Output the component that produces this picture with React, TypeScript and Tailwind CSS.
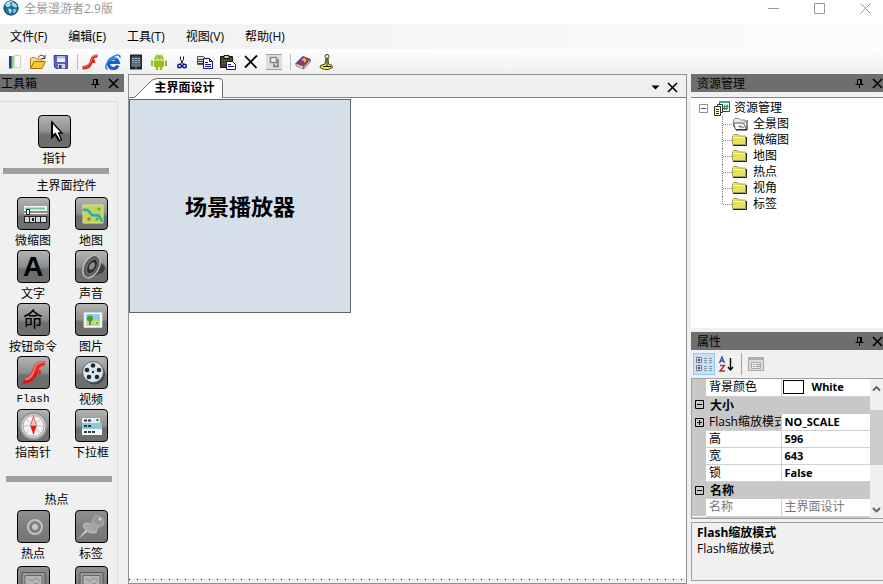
import type { ReactNode } from "react";
import clsx from "clsx";

const MENUS = ["文件(F)", "编辑(E)", "工具(T)", "视图(V)", "帮助(H)"];

interface IconProps {
  size?: number;
  box?: number;
  children: ReactNode;
}

function Icon({ size = 16, box = 16, children }: IconProps) {
  return (
    <svg width={size} height={size} viewBox={`0 0 ${box} ${box}`} fill="none" className="block shrink-0" aria-hidden>
      {children}
    </svg>
  );
}

const icons = {
  globe: (
    <Icon>
      <circle cx="8" cy="8" r="7.500" fill="#1d7399" />
      <circle cx="8" cy="8" r="7" stroke="#114f70" />
      <path d="M2 4.500C3.500 2.500 6 1.500 8 2L7 4l1 1-2 2H4L3 6zM9.500 2l3.500 2 1.500 3L12 7.500l-2-1-1.500-2zM5 8.500l3 .5 1 1.500L7.500 14 6 12zM10.500 9l3 .5-1.500 3-1.500 1z" fill="#a4dbea" />
      <path d="M4 3c2-1.500 4-1.500 6-1" stroke="#e6f7fc" />
    </Icon>
  ),
  newFile: (
    <Icon>
      <path d="M2 2h2.500v12.500H2z" fill="#15486b" />
      <path d="M4 2h1.500v12.500H4z" fill="#2c8fc4" />
      <path d="M5.500 2.500 7.500 2v11l-2 1.500z" fill="#7cc48e" />
      <path d="M7.500 1.500h6v12h-7z" fill="#fafaf5" stroke="#cfcfc6" />
      <path d="M7 2v11" stroke="#c6d85c" />
    </Icon>
  ),
  open: (
    <Icon>
      <path d="M.5 14.500v-10L2 3.500h3L6.500 5H12v3" fill="#f7dd78" stroke="#b48a12" />
      <path d="M.5 14.500 4 7.500h11.500L12 14.500z" fill="#fcc52c" stroke="#9a740c" />
      <path d="M8.500 3.500c1-3 4.500-3 6 0M15 1v3.500h-3" stroke="#333" />
    </Icon>
  ),
  save: (
    <Icon>
      <path d="M1 1.500h13.500v13H3L1.500 13z" fill="#5b60c8" stroke="#3a3f99" />
      <path d="M4 2h8v6H4z" fill="#f3f5ff" />
      <path d="M4 2h8v2.500H4z" fill="#aebbe8" />
      <path d="M5 10h7v4.500H5z" fill="#cfd4ef" />
      <path d="M6 11h2.500v3.500H6z" fill="#2c3080" />
    </Icon>
  ),
  flash: (
    <Icon>
      <path d="M15.500.500C10.500.500 9 3 8 6.500 7 10 5.500 11.500.500 12v3.500C6.500 15.500 9 13.500 10.500 9H13V6h-1.500C12 4.500 13 3.500 15.500 3.500z" fill="#d62925" />
      <path d="M14.500 1.500C11 1.500 10 4 9 7c-1 3.500-3 5.500-7.500 6" stroke="#f4766e" />
    </Icon>
  ),
  explorer: (
    <Icon>
      <path d="M13 11.500A5 5 0 1 1 13.300 8.500H4.500" stroke="#1562c8" strokeWidth="3.200" />
      <path d="M5 6.500a4 3.500 0 0 1 6-1.500" stroke="#63b4f4" />
      <path d="M2.500 15.500C-1.500 14 2.500 6 8.500 2.500c4-2.300 7-2 6.500 1.500" stroke="#2f86de" strokeWidth="1.600" />
    </Icon>
  ),
  phone: (
    <Icon>
      <path d="M2 .500h12v15H2z" fill="#1d2227" />
      <path d="M3.500 2.500h9v10h-9z" fill="#4d647a" />
      <path d="M4 4.500h8M4 6.500h8M4 8.500h8" stroke="#9db0c0" strokeDasharray="2 1" />
      <path d="M3.500 10.500h9v2h-9z" fill="#6f7b85" />
      <path d="M7 14h2" stroke="#999" />
    </Icon>
  ),
  android: (
    <Icon>
      <path d="M3 6.500h10v6.500H3zM3 5.500a5 4.500 0 0 1 10 0zM0 6.500h2.200v5.500H0zM13.800 6.500H16v5.500h-2.200zM4.800 13h2.400v3H4.800zM8.800 13h2.400v3H8.800z" fill="#93c01f" />
      <path d="m4.500 0 1.500 2M11.500 0 10 2" stroke="#93c01f" />
      <path d="M5.500 3.500h1v1h-1zM9.500 3.500h1v1h-1z" fill="#fff" />
    </Icon>
  ),
  cut: (
    <Icon>
      <path d="M6.500 2.500v3l3 4.500M9.500 2.500v3L6.500 10" stroke="#111" />
      <circle cx="5.500" cy="12" r="1.800" stroke="#0b0b8f" strokeWidth="1.400" />
      <circle cx="10.500" cy="12" r="1.800" stroke="#0b0b8f" strokeWidth="1.400" />
    </Icon>
  ),
  copy: (
    <Icon>
      <path d="M.5 2.500h6l2 2v6h-8z" fill="#e2e2e2" stroke="#555" />
      <path d="M1 5.500h6M1 7.500h5M1 9.500h5" stroke="#333" />
      <path d="M6.500 4.500h6l3 3v7h-9z" fill="#fff" stroke="#10107e" />
      <path d="M12.500 4.500v3h3M8 8.500h3M8 10.500h6M8 12.500h6" stroke="#10107e" />
    </Icon>
  ),
  paste: (
    <Icon>
      <path d="M.500 2.500h12v11H.500z" fill="#45451f" stroke="#111" />
      <path d="M2 6.500h9M2 9.500h4" stroke="#77743c" strokeDasharray="1 1" />
      <path d="M4 1.500h5v3H4z" fill="#dcd98c" stroke="#111" />
      <path d="M6.500 7.500h6l3 3v5h-9z" fill="#fff" stroke="#10107e" />
      <path d="M8 10.500h3M8 12.500h6" stroke="#10107e" />
    </Icon>
  ),
  remove: (
    <Icon>
      <path d="m2 2 11.500 12M14 1.500 2 13.500" stroke="#000" strokeWidth="1.800" />
    </Icon>
  ),
  arrange: (
    <Icon>
      <path d="M0 0h16v16H0z" fill="#dedede" />
      <path d="M0 .5h16M0 15.500h16" stroke="#a0a0a0" />
      <path d="M4.500 3.500h6v5h-6z" fill="#f2f2f2" stroke="#8a8a8a" strokeWidth="1.500" />
      <path d="M12 5v7.500H8V9.500" stroke="#777" strokeWidth="1.500" />
    </Icon>
  ),
  book: (
    <Icon>
      <path d="M.500 9.500 8 2l7.500 3L9 12.500z" fill="#8d3a6c" />
      <path d="m.500 9.500 8 3v2.500l-7-3z" fill="#ece3d6" stroke="#6b4a55" strokeWidth=".7" />
      <path d="m8.500 12.500 7-7.500v2.500L8.500 15z" fill="#c5acb4" stroke="#6b4a55" strokeWidth=".7" />
      <path d="m7 6 2.500-1 1 1.500L9 8" stroke="#f6d04c" strokeWidth="1.500" />
      <path d="M1.500 8.500 8 2.500" stroke="#5764b8" />
    </Icon>
  ),
  license: (
    <Icon>
      <circle cx="9" cy="2.500" r="2" fill="#fffbd0" stroke="#333" />
      <path d="M8 4.500h2l.5 5.500 3.500 1.500.5 2L10 15.500H6.500L2 13.500l.5-2L7 10z" fill="#f5e52a" stroke="#4b4508" />
      <path d="M9 5v7M5 12.500h8" stroke="#222" />
    </Icon>
  ),
};

const TOOLBAR: { label: string; icon: ReactNode }[][] = [
  [
    { label: "新建", icon: icons.newFile },
    { label: "打开", icon: icons.open },
    { label: "保存", icon: icons.save },
  ],
  [
    { label: "Flash", icon: icons.flash },
    { label: "浏览器", icon: icons.explorer },
    { label: "手机", icon: icons.phone },
    { label: "Android", icon: icons.android },
    { label: "剪切", icon: icons.cut },
    { label: "复制", icon: icons.copy },
    { label: "粘贴", icon: icons.paste },
    { label: "删除", icon: icons.remove },
    { label: "排列", icon: icons.arrange },
  ],
  [
    { label: "帮助", icon: icons.book },
    { label: "注册", icon: icons.license },
  ],
];

const glyphs = {
  pointer: (
    <Icon size={31} box={31}>
      <path d="M13 6v15l3.500-3 3.500 7 2.500-1.200L19.500 17H23z" fill="#fff" stroke="#000" strokeWidth="1.300" />
      <path d="M13 6v15l3-3 4 6" stroke="#000" strokeWidth="2" />
    </Icon>
  ),
  thumbs: (
    <Icon size={31} box={31}>
      <path d="M6 8h23v8H6z" fill="#f3f8f5" />
      <path d="M7 10.500h20" stroke="#6fc797" strokeWidth="2" />
      <path d="M6 14h23" stroke="#222" />
      <path d="M8.500 11.500h3v5h-3z" fill="#fff" stroke="#222" />
      <path d="M6 18h23v7H6z" fill="#222" />
      <path d="M7 19h4v5H7zM12 19h5v5h-5zM18 19h4v5h-4zM23 19h5v5h-5z" fill="#d8d8d8" />
      <path d="M14 20h2v3h-2z" fill="#222" />
    </Icon>
  ),
  map: (
    <Icon size={31} box={31}>
      <path d="M7 7h20v18H7z" fill="#b5d957" />
      <path d="M7 7h20v18H7z" stroke="#dbe8a8" />
      <path d="M19 7 8 24M19 16l8-7" stroke="#dbcc62" strokeWidth="1.500" />
      <path d="M7 12c5-1 6 1 8 4s6 0 8 2 3 4 3 6" stroke="#2ba9c4" strokeWidth="2.500" />
      <circle cx="13" cy="21" r="1.800" fill="#e2622b" />
      <circle cx="23" cy="11" r="1.500" fill="#65a82d" />
      <circle cx="21" cy="21" r="1.500" fill="#65a82d" />
    </Icon>
  ),
  letter: <span className="font-[Liberation_Sans,sans-serif] text-[28px] leading-7 font-bold">A</span>,
  sound: (
    <Icon size={31} box={31}>
      <path d="m20 9 5 3 4 3c1 4-1 7-4 8l-8 3z" fill="#3f3f3f" stroke="#777" />
      <ellipse cx="15.500" cy="15.500" rx="7.500" ry="12" transform="rotate(28 15.500 15.500)" fill="#5a5a5a" stroke="#b7b7b7" strokeWidth="1.500" />
      <ellipse cx="16" cy="15.500" rx="4.500" ry="8" transform="rotate(28 16 15.500)" fill="#2b2b2b" stroke="#777" />
      <ellipse cx="16" cy="15" rx="2.500" ry="4" transform="rotate(28 16 15)" fill="#8d8d8d" />
    </Icon>
  ),
  command: <span className="text-[20px] leading-7">命</span>,
  picture: (
    <Icon size={31} box={31}>
      <path d="M8 8.500h18v15H8z" fill="#fff" stroke="#c6d3db" />
      <path d="M10 10h14v7H10z" fill="#8ec9ee" />
      <path d="M10 17c4 1 8-2 14-1v6H10z" fill="#b9e07c" />
      <path d="M14 17v4" stroke="#7b5a2b" strokeWidth="1.500" />
      <circle cx="14" cy="14.500" r="3" fill="#4a9c28" />
      <path d="M20 18h2v2h-2z" fill="#6cb23f" />
    </Icon>
  ),
  flash: (
    <Icon size={31} box={31}>
      <path d="M27 4c-8-.5-10.500 3-12.500 8.500C12.500 18.500 11 21 6 21.500V27c8-.2 11-4.500 13-10h4v-4h-2.500C21.500 10 23 8.500 27 8.500z" fill="#e22b27" />
      <path d="M26 5c-6.500 0-8.500 3-10 8C14.500 19 12 22 7 22.500" stroke="#ff8077" strokeWidth="1.500" />
      <path d="M6 27v-2c7 0 10-4 12.500-9" stroke="#98110f" />
    </Icon>
  ),
  video: (
    <Icon size={31} box={31}>
      <circle cx="18.500" cy="17" r="10.500" fill="#334453" />
      <circle cx="17" cy="15" r="10.500" fill="#dce5ec" stroke="#516474" />
      <g fill="#1d2932">
        <circle cx="17" cy="8.500" r="2.300" />
        <circle cx="23" cy="13" r="2.300" />
        <circle cx="21" cy="20" r="2.300" />
        <circle cx="13" cy="20" r="2.300" />
        <circle cx="11" cy="13" r="2.300" />
        <circle cx="17" cy="15" r="1.200" />
      </g>
    </Icon>
  ),
  compass: (
    <Icon size={31} box={31}>
      <circle cx="15.500" cy="16" r="13" fill="#d9d9d9" stroke="#969696" strokeWidth="2" />
      <circle cx="15.500" cy="16" r="10.500" fill="#f3f3f3" stroke="#aaa" />
      <path d="M15.500 6v20M5.500 16h20M8.500 9l14 14M22.500 9l-14 14" stroke="#c2c2c2" />
      <path d="m15.500 6 3 10h-6z" fill="#f8cbc6" stroke="#d74a42" strokeWidth=".8" />
      <path d="m15.500 25-3-9h6z" fill="#e01a16" />
    </Icon>
  ),
  select: (
    <Icon size={31} box={31}>
      <path d="M6 8h18v5H6z" fill="#e4edf1" />
      <path d="M6 13h20v12H6z" fill="#f6fafb" />
      <path d="M6 13h20v6H6z" fill="#8fc6dd" />
      <path d="M8 10.500h7M8 16h8M8 22h11" stroke="#2c3b44" strokeWidth="2" strokeDasharray="3 1" />
      <path d="m20 9.500 1.500 2 1.500-2z" fill="#222" />
    </Icon>
  ),
  hotspot: (
    <Icon size={31} box={31}>
      <circle cx="17" cy="16" r="7" stroke="#c4c4c4" strokeWidth="2" />
      <circle cx="17" cy="16" r="3" fill="#c9c9c9" />
    </Icon>
  ),
  pin: (
    <Icon size={31} box={31}>
      <path d="m2 28 9-11 3 2z" fill="#c4c4c4" />
      <ellipse cx="14" cy="17" rx="4" ry="7.500" transform="rotate(-60 14 17)" fill="#aaa" stroke="#bdbdbd" />
      <path d="m12 15 6-8 9 7-8 6z" fill="#a3a3a3" />
      <ellipse cx="22.500" cy="10" rx="4.500" ry="6" transform="rotate(-48 22.500 10)" fill="#979797" stroke="#ababab" />
      <circle cx="24" cy="8" r="1.500" fill="#d0d0d0" />
    </Icon>
  ),
  frame: (
    <Icon size={31} box={31}>
      <path d="M4 5.500h23v20H4z" fill="#9a9a9a" stroke="#555" />
      <path d="M7 8.500h17v14H7z" fill="#b4b4b4" stroke="#666" />
      <path d="m10 12 4 2 4-3 4 3M9 17l5 1 6-2" stroke="#8a8a8a" />
    </Icon>
  ),
};

interface ToolProps {
  label?: string;
  glyph: ReactNode;
  mono?: boolean;
  disabled?: boolean;
}

const WIDGETS: ToolProps[] = [
  { label: "微缩图", glyph: glyphs.thumbs },
  { label: "地图", glyph: glyphs.map },
  { label: "文字", glyph: glyphs.letter },
  { label: "声音", glyph: glyphs.sound },
  { label: "按钮命令", glyph: glyphs.command },
  { label: "图片", glyph: glyphs.picture },
  { label: "Flash", glyph: glyphs.flash, mono: true },
  { label: "视频", glyph: glyphs.video },
  { label: "指南针", glyph: glyphs.compass },
  { label: "下拉框", glyph: glyphs.select },
];

const HOTSPOTS: ToolProps[] = [
  { label: "热点", glyph: glyphs.hotspot },
  { label: "标签", glyph: glyphs.pin },
  { glyph: glyphs.frame },
  { glyph: glyphs.frame },
];

function Tool({ label, glyph, mono, disabled }: ToolProps) {
  return (
    <button type="button" disabled={disabled} className="flex flex-col items-center whitespace-nowrap">
      <span
        className={clsx(
          "flex size-[33px] items-center justify-center rounded-[4px] border border-black bg-linear-to-b",
          disabled
            ? "from-[#8f8f8f] via-[#7e7e7e] to-[#747474]"
            : "from-[#b4b4b4] from-0% via-[#8e8e8e] via-50% to-[#6e6e6e] to-60%",
        )}
      >
        {glyph}
      </span>
      {label && (
        <span className={clsx("pt-px leading-[19px]", mono ? "font-[Liberation_Mono,monospace] text-[11px]" : "text-xs")}>
          {label}
        </span>
      )}
    </button>
  );
}

function CloseGlyph() {
  return (
    <Icon size={11} box={11}>
      <path d="m1 1 9 9M10 1l-9 9" stroke="#000" strokeWidth="1.600" />
    </Icon>
  );
}

function PanelHeader({ title, className }: { title: string; className?: string }) {
  return (
    <header className={clsx("flex h-[18px] shrink-0 items-center bg-[#6e6e6e]", className)}>
      <h2 className="flex-1 pt-px text-xs leading-[18px]">{title}</h2>
      <button type="button" aria-label="自动隐藏" className="mr-2">
        <Icon size={9} box={9}>
          <path d="M2.500 5.500v-5h4v5M5.500.500v5M.5 5.500h8M4.500 6v3" stroke="#000" />
        </Icon>
      </button>
      <button type="button" aria-label="关闭">
        <CloseGlyph />
      </button>
    </header>
  );
}

function FolderIcon({ active }: { active?: boolean }) {
  if (active) {
    return (
      <Icon>
        <path d="M1.500 11V4l1.500-1.500h4L8.500 4H13v3" fill="#eee" stroke="#888" />
        <path d="M3.500 13.500 1.500 7h10l3 6.500z" fill="#f7f7f7" stroke="#555" />
        <path d="M15 4v10H4" stroke="#111" />
        <path d="m6 11 2-2 2 2 1-1 1 2z" fill="#777" />
      </Icon>
    );
  }
  return (
    <Icon>
      <path d="M.5 12.500V4L2 2.500h4L7.500 4h6v8.500z" fill="#e9e25c" stroke="#a5a05a" />
      <path d="M1.500 5.500h11" stroke="#f8f5b4" />
      <path d="M14.500 5v8.500H1" stroke="#222" />
    </Icon>
  );
}

const RESOURCES = ["全景图", "微缩图", "地图", "热点", "视角", "标签"];

function ResourceTree() {
  return (
    <ul className="text-xs leading-4">
      <li>
        <div className="flex items-center">
          <button type="button" aria-label="折叠" className="mr-1.5 ml-2">
            <Icon size={9} box={9}>
              <path d="M.5.500h8v8h-8z" fill="#fff" stroke="#919191" />
              <path d="M2 4.500h5" stroke="#3a55a8" />
            </Icon>
          </button>
          <Icon>
            <path d="M5.500 1.500h10v10h-10z" fill="#fff" stroke="#444" />
            <path d="M5 1h11v2H5z" fill="#3aa7a0" />
            <path d="M11 4.500 10 10M13.500 4.500l-1 5.500M9.500 6.500h5M9 8.500h5" stroke="#16803c" />
            <path d="M3.500 4.500h5v8h-5z" fill="#fffde0" stroke="#333" />
            <path d="M.5 6.500h6v9h-6z" fill="#fffbc8" stroke="#333" />
            <path d="M2 9.500h3M2 11.500h3M2 13.500h3" stroke="#333" />
          </Icon>
          <span className="ml-1">资源管理</span>
        </div>
        <ul className="ml-[31px]">
          {RESOURCES.map((name, i) => (
            <li key={name} className="flex h-4 items-center">
              <span
                className={clsx(
                  "w-px self-start border-l border-dotted border-[#888]",
                  i === RESOURCES.length - 1 ? "h-2" : "h-4",
                )}
              />
              <span className="w-[9px] border-t border-dotted border-[#888]" />
              <FolderIcon active={i === 0} />
              <span className="ml-[5px]">{name}</span>
            </li>
          ))}
        </ul>
      </li>
    </ul>
  );
}

function Toggle({ open }: { open: boolean }) {
  return (
    <button type="button" aria-label={open ? "折叠" : "展开"} className="ml-[3px] block">
      <Icon size={9} box={9}>
        <path d="M.5.500h8v8h-8z" stroke="#000" />
        <path d={open ? "M2 4.500h5" : "M2 4.500h5M4.500 2v5"} stroke="#000" />
      </Icon>
    </button>
  );
}

type Row =
  | { kind: "group"; name: string }
  | { kind: "prop"; name: string; value: string; swatch?: boolean; selected?: boolean; readOnly?: boolean };

const ROWS: Row[] = [
  { kind: "prop", name: "背景颜色", value: "White", swatch: true },
  { kind: "group", name: "大小" },
  { kind: "prop", name: "Flash缩放模式", value: "NO_SCALE", selected: true },
  { kind: "prop", name: "高", value: "596" },
  { kind: "prop", name: "宽", value: "643" },
  { kind: "prop", name: "锁", value: "False" },
  { kind: "group", name: "名称" },
  { kind: "prop", name: "名称", value: "主界面设计", readOnly: true },
];

function PropertyTable() {
  return (
    <table className="w-full table-fixed border-collapse bg-white text-xs leading-4">
      <colgroup>
        <col className="w-[14px]" />
        <col className="w-[75px]" />
        <col />
      </colgroup>
      <tbody>
        {ROWS.map((row, i) =>
          row.kind === "group" ? (
            <tr key={i} className="h-[17px] bg-[#c8c8c8]">
              <td className="p-0">
                <Toggle open />
              </td>
              <th colSpan={2} className="p-0 pt-px pl-1 text-left font-bold">
                {row.name}
              </th>
            </tr>
          ) : (
            <tr key={i} className="h-[17px]">
              <td className="bg-[#c8c8c8] p-0">{row.selected && <Toggle open={false} />}</td>
              <th
                className={clsx(
                  "overflow-hidden border-r border-b border-[#d0d0d0] p-0 pl-[3px] text-left font-normal whitespace-nowrap",
                  row.selected && "bg-[#c8c8c8]",
                  row.readOnly && "text-[#777]",
                )}
              >
                {row.name}
              </th>
              <td
                className={clsx(
                  "border-b border-[#d0d0d0] p-0 pl-[3px]",
                  row.readOnly ? "text-[#777]" : "font-[Noto_Sans,sans-serif] text-[11px] font-bold",
                )}
              >
                <span className="flex items-center">
                  {row.swatch && <span className="mr-2 -ml-0.5 h-[14px] w-[21px] border border-black bg-white" />}
                  {row.value}
                </span>
              </td>
            </tr>
          ),
        )}
      </tbody>
    </table>
  );
}

function Scrollbar() {
  return (
    <div className="flex w-[13px] shrink-0 flex-col items-center bg-[#f0f0f0]">
      <button type="button" aria-label="向上" className="flex h-[18px] items-center">
        <Icon size={9} box={9}>
          <path d="m1 6.500 3.500-3.500L8 6.500" stroke="#606060" strokeWidth="1.800" />
        </Icon>
      </button>
      <div className="flex w-full flex-1 flex-col pt-[13px]">
        <div className="h-[55px] bg-[#cdcdcd]" />
      </div>
      <button type="button" aria-label="向下" className="flex h-[18px] items-center">
        <Icon size={9} box={9}>
          <path d="M1 3 4.500 6.500 8 3" stroke="#606060" strokeWidth="1.800" />
        </Icon>
      </button>
    </div>
  );
}

function Toolbox() {
  return (
    <aside className="flex w-[128px] shrink-0 flex-col overflow-hidden">
      <PanelHeader title="工具箱" className="mr-1 pr-[5px] pl-px" />
      <div className="mt-[9px] mr-[10px] flex-1 overflow-hidden border-t border-r border-[#dcdcdc] pt-[13px]">
        <div className="flex justify-center pr-2">
          <Tool label="指针" glyph={glyphs.pointer} />
        </div>
        <div className="mr-2 ml-[3px] h-1.5 bg-[#a0a0a0]" />
        <h3 className="pt-0.5 pb-px pl-4 text-center text-xs leading-5">主界面控件</h3>
        <div className="grid grid-cols-[58px_58px] pl-1">
          {WIDGETS.map((tool, i) => (
            <Tool key={i} {...tool} />
          ))}
        </div>
        <div className="mt-[14px] mr-[5px] ml-1.5 h-1.5 bg-[#a0a0a0]" />
        <h3 className="pt-2 pr-1 text-center text-xs leading-5">热点</h3>
        <div className="grid grid-cols-[58px_58px] gap-y-[3px] pl-1">
          {HOTSPOTS.map((tool, i) => (
            <Tool key={i} {...tool} disabled />
          ))}
        </div>
      </div>
    </aside>
  );
}

function Designer() {
  return (
    <main className="flex min-w-0 flex-1 flex-col border border-[#909090]">
      <div className="flex h-[23px] shrink-0 items-end border-b border-[#808080] bg-[#f0f0f0]">
        <button type="button" className="relative -mb-px ml-[5px] h-5 w-[89px] pl-3 text-xs leading-5 font-bold">
          <svg className="absolute inset-0" width="89" height="20" viewBox="0 0 89 20" aria-hidden>
            <path d="M.5 19.500 15 5q4-4.500 8-4.500h62q3.500 0 3.500 3v16" fill="#fff" stroke="#6b6b6b" />
            <path d="M1 19.500h87" stroke="#fff" />
          </svg>
          <span className="relative">主界面设计</span>
        </button>
        <div className="mb-1 ml-auto flex items-center gap-[7px] pr-2">
          <button type="button" aria-label="窗口列表">
            <Icon size={9} box={9}>
              <path d="M.5 2.500h8l-4 4z" fill="#000" />
            </Icon>
          </button>
          <button type="button" aria-label="关闭">
            <CloseGlyph />
          </button>
        </div>
      </div>
      <div className="min-h-0 flex-1 bg-white pt-px">
        <div className="flex h-[214px] w-[222px] items-center justify-center border border-[#606468] bg-[#d5dfe9] text-[22px] font-bold">
          场景播放器
        </div>
      </div>
      <div className="h-[5px] bg-[#f0f0f0] pt-px">
        <div className="h-px bg-[repeating-linear-gradient(90deg,#000_0_1px,transparent_1px_8px)]" />
      </div>
    </main>
  );
}

function PropertyPanel() {
  return (
    <section className="flex flex-col pb-[3px]">
      <PanelHeader title="属性" className="pl-1.5" />
      <div className="flex h-7 items-center pl-0.5">
        <button type="button" aria-label="按分类" className="flex size-[22px] items-center justify-center border border-[#90c8f6] bg-[#c4e1f8]">
          <Icon>
            <path d="M.5 1.500h5v5h-5zM.5 9.500h5v5h-5z" fill="#fff" stroke="#777" />
            <path d="M1.500 4h3M3 2.500v3M1.500 12h3M3 10.500v3" stroke="#10107e" />
            <path d="M8 2.500h3M8 4.500h3M8 6.500h3M8 10.500h3M8 12.500h3M8 14.500h3M13 2.500h3M13 4.500h3M13 6.500h3M13 10.500h3M13 12.500h3M13 14.500h3" stroke="#8795a5" />
          </Icon>
        </button>
        <button type="button" aria-label="按字母" className="flex size-[22px] items-center justify-center">
          <Icon>
            <path d="M1.500 7 4 1l2.500 6M2.500 5h3" stroke="#2d55a8" strokeWidth="1.400" />
            <path d="M2 9.500h4.500L2 15h5" stroke="#a8313a" strokeWidth="1.400" />
            <path d="M12.500 2v12M10 11l2.500 3 2.500-3" stroke="#000" strokeWidth="1.400" />
          </Icon>
        </button>
        <span className="mr-[3px] ml-1 h-[22px] w-px bg-[#a0a0a0]" />
        <button type="button" aria-label="属性页" className="flex size-[22px] items-center justify-center" disabled>
          <Icon>
            <path d="M.5 1.500h15v13H.5z" fill="#dcdcdc" stroke="#a8a8a8" />
            <path d="M1 3h14" stroke="#b0b0b0" strokeWidth="2" />
            <path d="M3.500 6.500h9v6h-9z" fill="#eee" stroke="#aaa" />
            <path d="M5 8.500h2M8 8.500h4M5 10.500h2M8 10.500h4" stroke="#999" />
          </Icon>
        </button>
      </div>
      <div className="flex h-[141px] overflow-hidden border-y border-l border-[#a0a0a0] bg-[#c8c8c8]">
        <div className="min-w-0 flex-1">
          <PropertyTable />
        </div>
        <Scrollbar />
      </div>
      <div className="mt-[3px] h-[59px] border border-r-0 border-[#a0a0a0] pt-0.5 pl-[5px] text-xs leading-4">
        <h3 className="font-bold">Flash缩放模式</h3>
        <p>Flash缩放模式</p>
      </div>
    </section>
  );
}

export default function App() {
  return (
    <div className="flex h-screen flex-col overflow-hidden bg-[#f0f0f0] font-[Open_Sans,Noto_Sans_CJK_SC,sans-serif] text-black">
      <header className="flex h-6 shrink-0 items-start bg-white pl-[3px]">
        {icons.globe}
        <h1 className="ml-[5px] flex-1 text-xs leading-[18px] text-[#999]">全景漫游者2.9版</h1>
        <div className="flex items-center gap-[35px] pt-[3px] pr-3">
          <button type="button" aria-label="最小化">
            <Icon size={11} box={11}>
              <path d="M0 5.500h11" stroke="#999" />
            </Icon>
          </button>
          <button type="button" aria-label="最大化">
            <Icon size={11} box={11}>
              <path d="M.5.500h10v10H.5z" stroke="#999" />
            </Icon>
          </button>
          <button type="button" aria-label="关闭窗口">
            <Icon size={11} box={11}>
              <path d="m.5.500 10 10M10.500.500l-10 10" stroke="#999" />
            </Icon>
          </button>
        </div>
      </header>
      <nav className="flex h-[25px] shrink-0 items-center gap-px bg-linear-to-r from-[#f0f0f0] to-[#fcfcfc]">
        {MENUS.map((menu) => (
          <button key={menu} type="button" className="px-2.5 text-xs leading-6">
            {menu}
          </button>
        ))}
      </nav>
      <div role="toolbar" className="flex h-[25px] shrink-0 items-center bg-linear-to-b from-[#fdfdfd] to-[#f0f0f0] pl-[3px]">
        {TOOLBAR.map((group, i) => (
          <div key={i} className="flex items-center">
            {i > 0 && <span className="h-4 w-1.5 border-r border-[#bdbdbd]" />}
            {group.map(({ label, icon }) => (
              <button key={label} type="button" aria-label={label} className="flex w-[23px] justify-center">
                {icon}
              </button>
            ))}
          </div>
        ))}
      </div>
      <div className="flex min-h-0 flex-1">
        <Toolbox />
        <Designer />
        <div className="ml-1 flex w-[192px] shrink-0 flex-col">
          <PanelHeader title="资源管理" className="pl-1.5" />
          <div className="mt-[5px] mb-1 min-h-0 flex-1 overflow-hidden border-t border-[#828790] bg-white pt-0.5">
            <ResourceTree />
          </div>
          <PropertyPanel />
        </div>
      </div>
    </div>
  );
}
